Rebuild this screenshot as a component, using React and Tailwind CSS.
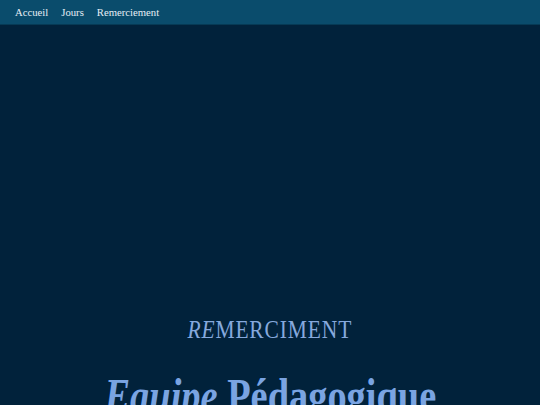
import React from 'react';

const links = ['Accueil', 'Jours', 'Remerciement'];

export default function App() {
  return (
    <div className="min-h-[405px] bg-[#01223b] font-['Liberation_Serif',serif]">
      <nav className="h-[25px] bg-[#0a4c6c] border-b border-[#063a55] flex items-center gap-[13px] pl-[15px]">
        {links.map((l) => (
          <a key={l} href="#" className="text-[10.7px] leading-none text-[#e6eef5]">
            {l}
          </a>
        ))}
      </nav>

      <section className="flex flex-col items-center pt-[292px] text-center">
        <p className="inline-block scale-x-[0.86] text-[25px] leading-none tracking-[1px] text-[#86a9dd]">
          <span className="italic">RE</span>MERCIMENT
        </p>
        <h1 className="mt-[30px] inline-block scale-x-[0.8] text-[48px] font-bold leading-none text-[#7aa4e2] whitespace-nowrap">
          <span className="italic">Equipe</span> Pédagogique
        </h1>
      </section>
    </div>
  );
}
